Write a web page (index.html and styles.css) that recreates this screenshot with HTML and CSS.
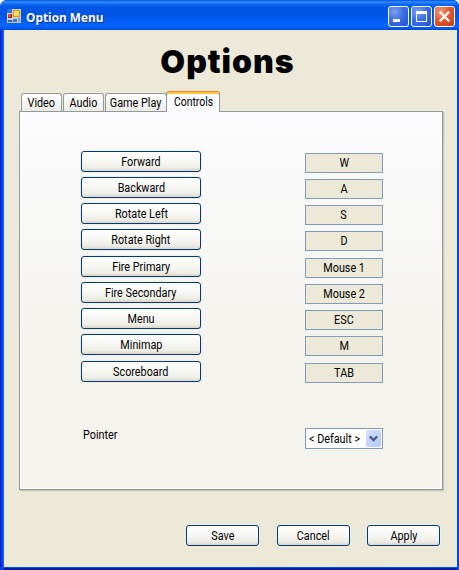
FILE: index.html
```html
<!DOCTYPE html>
<html lang="en">
<head>
<meta charset="utf-8">
<title>Option Menu</title>
<link rel="stylesheet" href="styles.css">
</head>
<body>
<div class="window">
  <header class="titlebar">
    <svg class="app-icon" width="14" height="14" viewBox="0 0 14 14" shape-rendering="crispEdges">
      <rect width="14" height="14" fill="#c9cbd0"/>
      <rect x="0" y="0" width="5" height="4" fill="#2c6fe4"/>
      <rect x="0" y="4" width="6" height="6" fill="#d9d2d0"/>
      <rect x="1" y="5" width="4" height="4" fill="#a01818"/>
      <rect x="1" y="5" width="3" height="3" fill="#d8453a"/>
      <rect x="6" y="1" width="7" height="7" fill="#d79a13"/>
      <rect x="7" y="2" width="5" height="5" fill="#ffdc59"/>
      <rect x="1" y="11" width="4" height="2" fill="#2f62c4"/>
      <rect x="6" y="10" width="4" height="3" fill="#3f76dc"/>
      <rect x="11" y="9" width="2" height="4" fill="#7ba3ea"/>
    </svg>
    <span class="caption">Option Menu</span>
    <div class="controls">
      <button class="ctl" aria-label="Minimize"><svg width="19" height="19" shape-rendering="crispEdges"><rect x="4" y="12" width="7" height="3" fill="#fff"/></svg></button>
      <button class="ctl" aria-label="Maximize"><svg width="19" height="19" shape-rendering="crispEdges"><path d="M4 4h11v11H4zM5 7v7h9V7z" fill="#fff" fill-rule="evenodd"/></svg></button>
      <button class="ctl close" aria-label="Close"><svg width="19" height="19"><path d="M4.8 4.8l9.4 9.4M14.2 4.8l-9.4 9.4" stroke="#fff" stroke-width="2.2"/></svg></button>
    </div>
  </header>
  <main class="client">
    <h1>Options</h1>
    <nav class="tabs">
      <div class="tab"><span>Video</span></div>
      <div class="tab"><span>Audio</span></div>
      <div class="tab play"><span>Game Play</span></div>
      <div class="tab active"><span>Controls</span></div>
    </nav>
    <section class="panel">
      <div class="row"><button class="btn"><span>Forward</span></button><div class="key"><span>W</span></div></div>
      <div class="row"><button class="btn"><span>Backward</span></button><div class="key"><span>A</span></div></div>
      <div class="row"><button class="btn"><span>Rotate Left</span></button><div class="key"><span>S</span></div></div>
      <div class="row"><button class="btn"><span>Rotate Right</span></button><div class="key"><span>D</span></div></div>
      <div class="row"><button class="btn"><span>Fire Primary</span></button><div class="key"><span>Mouse 1</span></div></div>
      <div class="row"><button class="btn"><span>Fire Secondary</span></button><div class="key"><span>Mouse 2</span></div></div>
      <div class="row"><button class="btn"><span>Menu</span></button><div class="key"><span>ESC</span></div></div>
      <div class="row"><button class="btn"><span>Minimap</span></button><div class="key"><span>M</span></div></div>
      <div class="row"><button class="btn"><span>Scoreboard</span></button><div class="key"><span>TAB</span></div></div>
      <div class="pointer-row">
        <span class="label">Pointer</span>
        <div class="select"><span>&lt; Default &gt;</span><i class="arrow"><svg width="15" height="17" viewBox="0 0 15 17"><path d="M3.8 6.3L7.5 10l3.7-3.7" fill="none" stroke="#4d6185" stroke-width="2.4"/></svg></i></div>
      </div>
    </section>
    <footer class="actions">
      <button class="btn"><span>Save</span></button>
      <button class="btn"><span>Cancel</span></button>
      <button class="btn last"><span>Apply</span></button>
    </footer>
  </main>
</div>
</body>
</html>
```
FILE: styles.css
```css
* { box-sizing: border-box; }
body { margin: 0; background: #fff; overflow: hidden; font: 12px/14px Roboto, "Liberation Sans", sans-serif; color: #000; }
button { font: inherit; color: inherit; padding: 0; margin: 0; }

.window { width: 459px; height: 570px; background: #0046e4; border-radius: 7px 6px 0 0; overflow: hidden; display: flex; flex-direction: column; }
.titlebar {
  height: 30px; flex: none; display: flex; align-items: center; padding: 3px 4px 0 7px;
  background: linear-gradient(#0453d8 0, #2f8cff 2px, #1169f4 4px, #0058e6 7px, #0054e3 14px, #005cf5 20px, #0366ff 25px, #0060fa 27px, #004ad2 30px);
}
.app-icon { flex: none; margin-top: -1px; }
.caption { font: bold 13px/18px "Open Sans", sans-serif; color: #fff; text-shadow: 1px 1px 0 #0a2a8c; margin-left: 5px; flex: 1; white-space: nowrap; transform: scaleX(.91); transform-origin: left; }
.controls { display: flex; gap: 2px; }
.ctl { width: 21px; height: 21px; border: 1px solid #fff; border-radius: 3px; background: radial-gradient(circle at 30% 25%, #7da0f2 0, #3c6fe6 45%, #1d50d2 100%); }
.ctl svg { display: block; }
.close { background: radial-gradient(circle at 30% 25%, #f09a7c 0, #e25a33 45%, #c63a12 100%); }

.client {
  height: 537px; margin-left: 4px; margin-right: 2px; background: #ece9d8; padding: 0 14px 0 15px;
  box-shadow: 0 1px 0 #0050ee, 0 3px 0 #001ea0, -1px 0 0 #1660f0, -3px 0 0 #0046e4, -4px 0 0 #0019cf, 2px 0 0 #0046e4;
}
h1 { margin: 0; height: 60px; padding: 13px 7px 0 0; font: 900 32px/38px Inter, sans-serif; letter-spacing: 1px; text-align: center; }
.btn > span, .key > span, .tab > span, .label, .select > span { display: inline-block; white-space: nowrap; transform: scaleX(.9); }

.tabs { display: flex; align-items: flex-end; height: 21px; padding-left: 2px; gap: 1px; position: relative; z-index: 1; }
.tab { width: 41px; height: 18px; border: 1px solid #919b9c; border-bottom: 0; border-radius: 3px 3px 0 0; background: linear-gradient(#fff, #ecebe6); display: flex; justify-content: center; align-items: center; line-height: 16px; }
.play { width: 62px; }
.active { width: 54px; height: 21px; margin: 0 0 -1px -2px; padding: 0 0 1px 1px; background: #fcfcfe; border-top: 1px solid #e68b2c; box-shadow: inset 0 2px 0 #ffc73c; }
.active > span { transform: scaleX(.87); }

.panel { width: 424px; height: 379px; border: 1px solid #919b9c; background: linear-gradient(#fcfcfe, #f4f3ee 60%, #f4f3ee); box-shadow: inset -1px -1px 0 #fff, inset 1px 0 0 #fff, 1px 1px 1px #c9c5b3; padding: 39px 59px 0 61px; }
.row { display: flex; justify-content: space-between; height: 21px; margin-bottom: 5px; }
.row:nth-child(4n) { margin-bottom: 6px; }
.btn { width: 120px; height: 21px; border: 1px solid #003c74; border-radius: 3px; background: linear-gradient(#fff, #f5f5f1 55%, #eeede6 82%, #d9d5c9); box-shadow: 0 0 0 1px #efede6; display: flex; justify-content: center; align-items: center; }
.key { width: 78px; height: 20px; margin-top: 2px; border: 1px solid #7f9db9; background: #ece9d8; display: flex; justify-content: center; align-items: center; flex: none; }
.pointer-row { display: flex; justify-content: space-between; margin-top: 46px; padding-left: 2px; }
.label { transform-origin: left; height: 14px; }
.select { width: 78px; height: 21px; border: 1px solid #7f9db9; background: #fff; display: flex; align-items: center; justify-content: space-between; padding: 0 1px 0 3px; }
.select > span { transform-origin: left; }
.arrow { width: 15px; height: 17px; flex: none; border-radius: 2px; background: linear-gradient(135deg, #d5e0fd, #b2c8f8); margin-left: -10px; }
.arrow svg { display: block; }

.actions { display: flex; justify-content: flex-end; gap: 18px; padding-top: 35px; }
.actions .btn { width: 73px; }
.actions .last { margin-right: 3px; margin-left: -1px; }
```
